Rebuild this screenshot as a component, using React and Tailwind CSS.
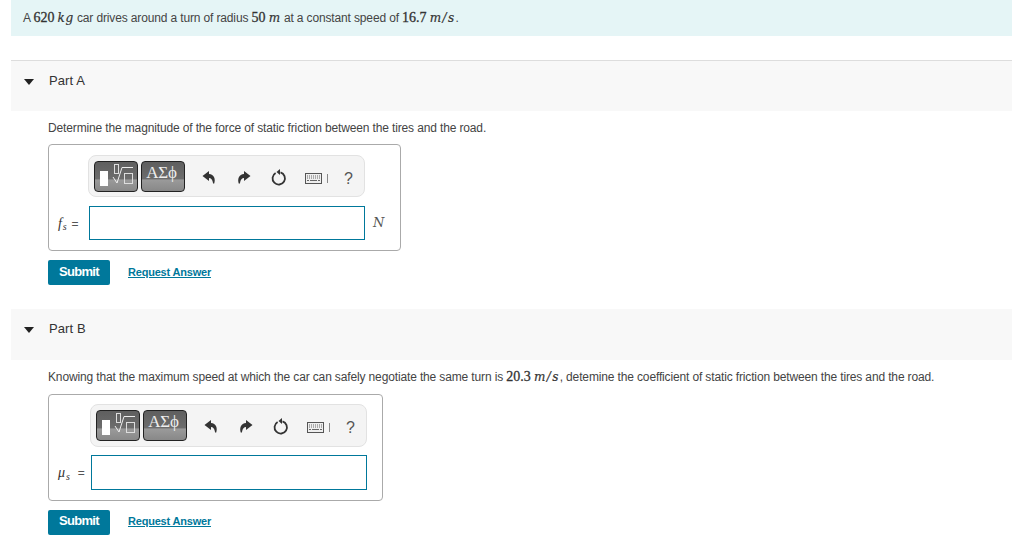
import React from 'react';

function N({ children }) {
  return <span className="font-['Liberation_Serif',serif] text-[14px] text-[#333] tracking-[0px] [-webkit-text-stroke:0.3px_#333]">{children}</span>;
}

function V({ children, wide }) {
  return <span className={`font-['DejaVu_Serif',serif] italic text-[12px] text-[#333] [-webkit-text-stroke:0.2px_#333] ${wide ? 'tracking-[1.4px]' : 'tracking-[0.6px]'}`}>{children}</span>;
}

function Undo({ flip }) {
  return (
    <svg width="14" height="15" viewBox="0 0 14 15" className={flip ? '-scale-x-100' : ''}>
      <path d="M7 1 L0.5 6 L7 11 L7 8 C9 8 10.5 9.5 11 13 L12 14 C14 9 12 4.5 7 4 Z" fill="#333" />
    </svg>
  );
}

function Reload() {
  return (
    <svg width="16" height="17" viewBox="0 0 16 17">
      <path d="M9.5 3.4 A6.2 6.2 0 1 1 4.6 4" fill="none" stroke="#333" strokeWidth="1.8" />
      <path d="M9 0 L9 6 L5.5 3 Z" fill="#333" />
    </svg>
  );
}

function Keyboard() {
  return (
    <svg width="17" height="11" viewBox="0 0 17 11">
      <rect x="0.5" y="0.5" width="16" height="10" fill="#eee" stroke="#555" />
      <path d="M2 3h13M2 5h13" stroke="#666" strokeWidth="1" strokeDasharray="1 1" />
      <path d="M2 7.5h2M5 7.5h7M13 7.5h2" stroke="#666" strokeWidth="1" />
    </svg>
  );
}

const btn = 'w-[44px] h-[31px] rounded-[4px] border border-[#222] bg-[linear-gradient(#5f5f5f_0%,#6c6c6c_58%,#9a9a9a_62%,#888_100%)]';

function Toolbar({ h }) {
  return (
    <div className={`${h} w-[277px] rounded-lg border border-[#e2e2e2] bg-[#f4f4f4] flex items-center pl-[5px]`}>
      <div className={btn}>
        <svg width="42" height="29" viewBox="0 0 42 29">
          <rect x="5" y="9" width="8" height="15" fill="#fff" />
          <rect x="19.5" y="2.5" width="4" height="9" fill="none" stroke="#ddd" />
          <path d="M18 15 L22 21 L27 5.5 L38 5.5" fill="none" stroke="#eee" />
          <rect x="29.5" y="11.5" width="8" height="10" fill="none" stroke="#ddd" />
        </svg>
      </div>
      <div className={`ml-[3px] ${btn} flex justify-center pt-[1px] pr-[3px] font-['Liberation_Serif',serif] text-[17px] leading-[20px] text-[#eee]`}>
        ΑΣϕ
      </div>
      <div className="ml-[17px] mt-[2px]"><Undo /></div>
      <div className="ml-[21px] mt-[2px]"><Undo flip /></div>
      <div className="ml-[20px] mt-[2px]"><Reload /></div>
      <div className="ml-[18px] mt-[4px]"><Keyboard /></div>
      <div className="ml-[5px] mt-[4px] w-px h-[9px] bg-[#888]" />
      <div className="ml-[16px] mt-[5px] text-[16px] text-[#555]">?</div>
    </div>
  );
}

function Answer({ label, unit, boxW, labelW, toolPad, toolH, inputH, inputMt, top }) {
  return (
    <div className={`${boxW} h-[107px] rounded-[4px] border border-[#aaa] flex flex-col`}>
      <div className={`${toolPad} ${top}`}>
        <Toolbar h={toolH} />
      </div>
      <div className={`flex items-center ${inputMt}`}>
        <div className={`${labelW} pl-[9px] text-[12px] text-[#555] shrink-0`}>{label}</div>
        <div className={`w-[276px] ${inputH} border border-[#00789b] bg-white shrink-0`} />
        {unit && <div className="ml-[8px] font-['DejaVu_Serif',serif] italic text-[13px] text-[#555]">{unit}</div>}
      </div>
    </div>
  );
}

function Actions({ submitPad, linkPad }) {
  return (
    <div className="flex items-center mt-[9px]">
      <div className={`w-[62px] h-[25px] ${submitPad} rounded-[2px] bg-[#00789b] text-white text-[13px] font-bold flex items-center justify-center tracking-[-0.7px]`}>Submit</div>
      <a className={`ml-[18px] ${linkPad} text-[11px] font-bold text-[#00789b] underline tracking-[-0.2px]`}>Request Answer</a>
    </div>
  );
}

function PartHead({ name, border }) {
  return (
    <div className={`ml-[11px] h-[51px] bg-[#f8f8f8] flex pt-[11px] ${border ? 'border-t border-[#ddd]' : ''}`}>
      <svg width="10" height="6" viewBox="0 0 10 6" className="ml-[13px] mt-[7px]"><path d="M0 0h10L5 6z" fill="#222" /></svg>
      <div className="ml-[15px] text-[13px] leading-[18px] text-[#333] tracking-[0.1px]">{name}</div>
    </div>
  );
}

export default function App() {
  return (
    <div className="w-[1012px] h-[557px] bg-white overflow-hidden font-['Liberation_Sans',sans-serif] text-[12px] text-[#444] tracking-[-0.14px]">
      <div className="ml-[11px] h-[36px] pb-[2px] bg-[#e5f5f6] pl-[12px] flex items-center">
        <div className="whitespace-pre">A <N>620</N> <V>kg</V> car drives around a turn of radius <N>50</N> <V>m</V> at a constant speed of <N>16.7</N> <V wide>m/s</V>.</div>
      </div>
      <div className="mt-[24px]"><PartHead name="Part A" border /></div>
      <div className="pl-[48px]">
        <div className="pt-[9px] h-[33px] leading-[16px]">Determine the magnitude of the force of static friction between the tires and the road.</div>
        <Answer
          label={<span><i className="font-['Liberation_Serif',serif] text-[14px] text-[#333]">f<sub className="text-[10px] ml-[1px]">s</sub></i><span className="ml-[5px]">=</span></span>}
          unit="N" boxW="w-[353px]" labelW="w-[40px]" toolPad="pl-[39px]" toolH="h-[42px]" inputH="h-[34px]" inputMt="mt-[9px]" top="pt-[10px]"
        />
        <Actions submitPad="pb-[2px]" linkPad="" />
      </div>
      <div className="mt-[24px]"><PartHead name="Part B" /></div>
      <div className="pl-[48px]">
        <div className="pt-[9px] h-[34px] leading-[16px] whitespace-pre">Knowing that the maximum speed at which the car can safely negotiate the same turn is <N>20.3</N> <V wide>m/s</V>, detemine the coefficient of static friction between the tires and the road.</div>
        <Answer
          label={<span><i className="font-['Liberation_Serif',serif] text-[14px] text-[#333]">μ<sub className="text-[10px] ml-[1px]">s</sub></i><span className="ml-[8px]">=</span></span>}
          boxW="w-[335px]" labelW="w-[42px]" toolPad="pl-[41px]" toolH="h-[43px]" inputH="h-[35px]" inputMt="mt-[8px]" top="pt-[9px]"
        />
        <Actions submitPad="pb-[4px]" linkPad="pb-[2px]" />
      </div>
    </div>
  );
}
